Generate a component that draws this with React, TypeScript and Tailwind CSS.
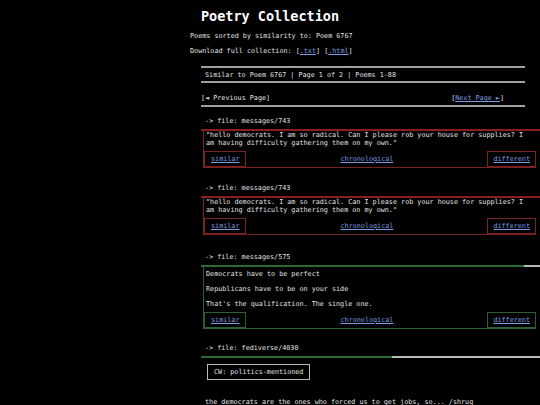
import React from 'react';

type Tone = 'red' | 'green';

interface Entry {
  file: string;
  tone: Tone;
  fill: number; // px of colored bar
  gapAfter: string;
  lines?: string[];
  paragraphs?: string[];
}

const entries: Entry[] = [
  {
    file: 'messages/743',
    tone: 'red',
    fill: 339,
    gapAfter: 'mb-[16px]',
    lines: [
      '"hello democrats. I am so radical. Can I please rob your house for supplies? I',
      'am having difficulty gathering them on my own."',
    ],
  },
  {
    file: 'messages/743',
    tone: 'red',
    fill: 339,
    gapAfter: 'mb-[18px]',
    lines: [
      '"hello democrats. I am so radical. Can I please rob your house for supplies? I',
      'am having difficulty gathering them on my own."',
    ],
  },
  {
    file: 'messages/575',
    tone: 'green',
    fill: 323,
    gapAfter: 'mb-[15px]',
    paragraphs: [
      'Democrats have to be perfect',
      'Republicans have to be on your side',
      "That's the qualification. The single one.",
    ],
  },
];

function Link({ children }: { children: React.ReactNode }) {
  return <a className="text-[#7d9be0] underline underline-offset-1 cursor-pointer">{children}</a>;
}

function Bar({ tone, fill }: { tone: Tone; fill: number }) {
  return (
    <div className="flex h-[2px] w-[339px]">
      <div className={tone === 'red' ? 'bg-[#8c1d1d] h-full' : 'bg-[#2c6a34] h-full'} style={{ width: fill }} />
      <div className="flex-1 bg-[#b8b8b8] h-full" />
    </div>
  );
}

function PoemEntry({ entry }: { entry: Entry }) {
  const border = entry.tone === 'red' ? 'border-[#7a2222]' : 'border-[#2c5e32]';
  return (
    <div className={entry.gapAfter}>
      <div className="pl-[4px] leading-[8px] mb-[4px]">-&gt; file: {entry.file}</div>
      <Bar tone={entry.tone} fill={entry.fill} />
      <div className={`ml-[2px] w-[333px] border-l border-b ${border}`}>
        {entry.lines && (
          <div className="pl-[2px] leading-[8px] mb-[4px]">
            {entry.lines.map((l, i) => (
              <div key={i} className="whitespace-pre">{l}</div>
            ))}
          </div>
        )}
        {entry.paragraphs && (
          <div className="pl-[2px] pt-[3px] flex flex-col gap-[7px] mb-[4px]">
            {entry.paragraphs.map((p, i) => (
              <p key={i} className="leading-[8px]">{p}</p>
            ))}
          </div>
        )}
        <div className="flex items-stretch justify-between h-[16px]">
          <div className={`border ${border} px-[6px] flex items-center`}>
            <Link>similar</Link>
          </div>
          <div className="flex items-center">
            <Link>chronological</Link>
          </div>
          <div className={`border ${border} px-[5px] flex items-center`}>
            <Link>different</Link>
          </div>
        </div>
      </div>
    </div>
  );
}

export default function App() {
  return (
    <div
      className="w-[540px] h-[405px] overflow-hidden bg-black text-[#e2e2e2] text-[6.75px]"
      style={{ fontFamily: '"DejaVu Sans Mono", "Liberation Mono", monospace' }}
    >
      <h1 className="pt-[8px] text-center text-white font-bold text-[13.5px] leading-[16px]">Poetry Collection</h1>

      <div className="pl-[190px]">
        <p className="mt-[8px] leading-[8px]">Poems sorted by similarity to: Poem 6767</p>
        <p className="mt-[7px] leading-[8px]">
          Download full collection: [<Link>.txt</Link>] [<Link>.html</Link>]
        </p>

        <div className="ml-[11px] w-[324px]">
          <div className="mt-[11px] h-[2px] bg-[#a0a0a0]" />
          <div className="pl-[4px] pt-[3px] pb-[2px] leading-[8px]">Similar to Poem 6767 | Page 1 of 2 | Poems 1-88</div>
          <div className="h-[2px] bg-[#a0a0a0]" />
          <div className="flex justify-between pr-[21px] mt-[11px] mb-[3px] leading-[8px]">
            <span>[◄ Previous Page]</span>
            <span>
              [<Link>Next Page ►</Link>]
            </span>
          </div>
          <div className="h-[2px] bg-[#a0a0a0]" />
        </div>

        <div className="ml-[11px] mt-[10px]">
          {entries.map((e, i) => (
            <PoemEntry key={i} entry={e} />
          ))}

          <div>
            <div className="pl-[4px] leading-[8px] mb-[4px]">-&gt; file: fediverse/4030</div>
            <Bar tone="green" fill={191} />
            <div className="ml-[6px] mt-[6px] inline-block border border-[#b8b8b8] px-[6px] py-[3px] leading-[8px]">
              CW: politics-mentioned
            </div>
            <p className="pl-[4px] mt-[18px] leading-[8px]">
              the democrats are the ones who forced us to get jobs, so... /shrug
            </p>
          </div>
        </div>
      </div>
    </div>
  );
}
